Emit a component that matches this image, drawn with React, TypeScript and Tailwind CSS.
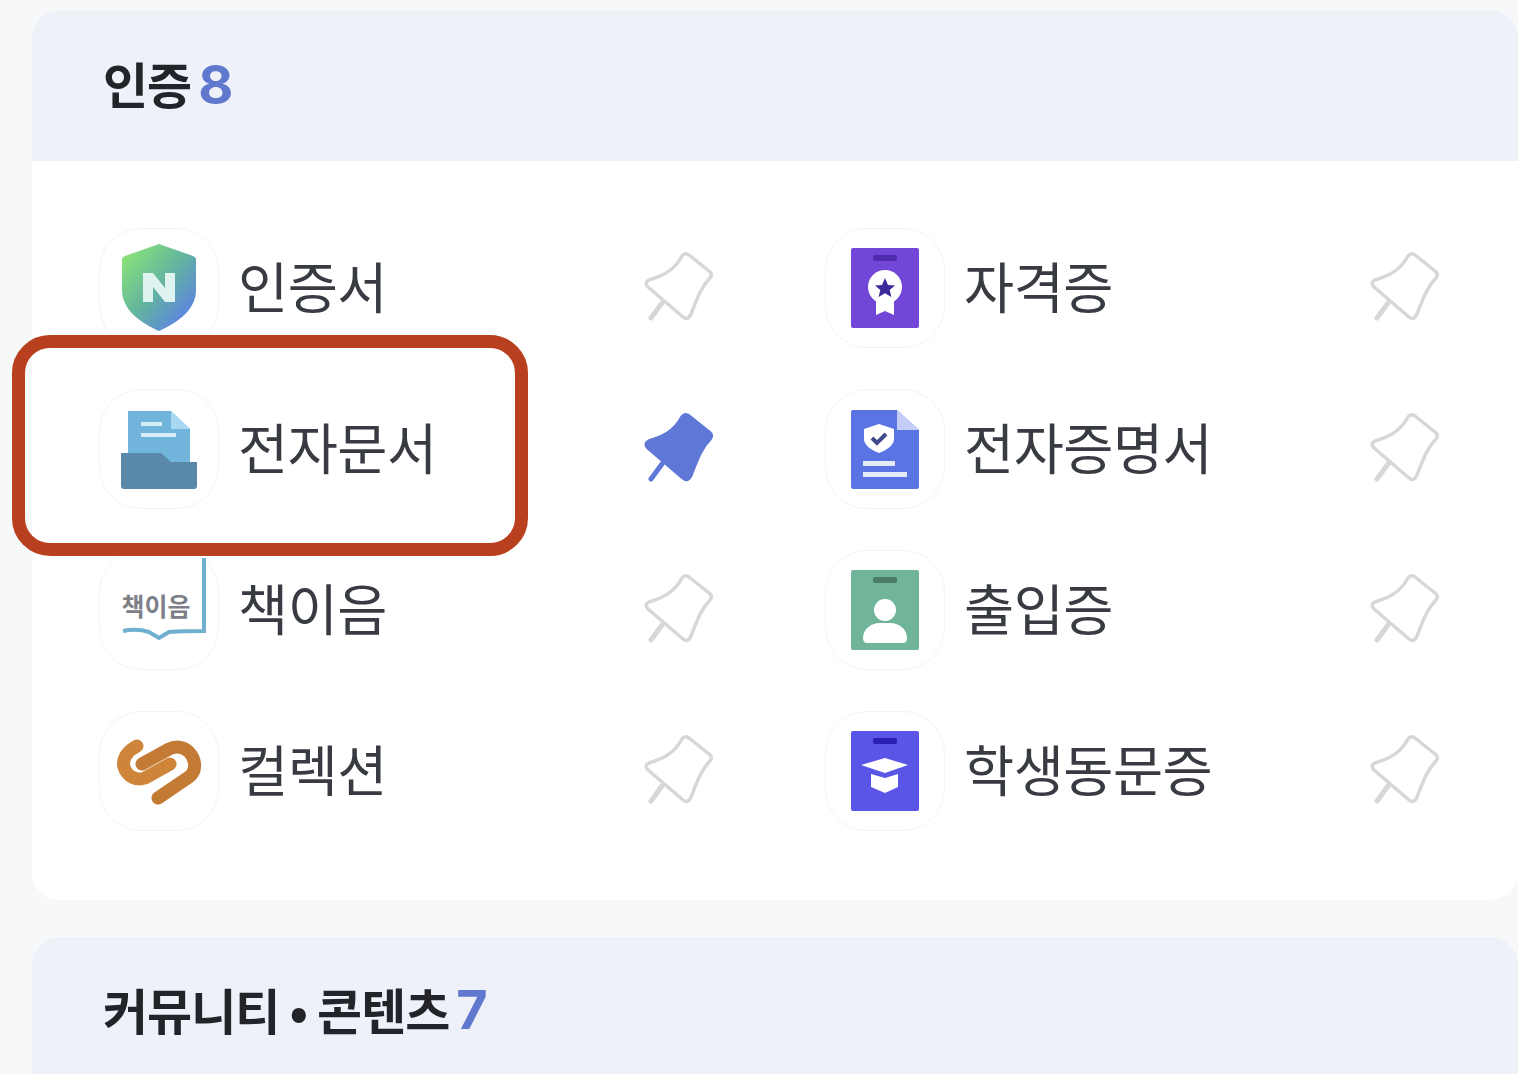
import type { ReactNode } from 'react';

const PIN_HEAD =
  'M38 4 Q41 0 45 3 L65 19 Q69 22 66 26 C56 36 52 50 47 62 Q44 69 39 65 L4 35 Q0 30 5 28 C18 24 30 19 38 4Z';

function PinIcon({ active }: { active?: boolean }) {
  return (
    <svg width="70" height="72" viewBox="-1 -1 70 72" className="shrink-0 mb-[2px]">
      <path
        d={PIN_HEAD}
        fill={active ? '#5f78d8' : '#ffffff'}
        stroke={active ? '#5f78d8' : '#d6d7d9'}
        strokeWidth="3.5"
        strokeLinejoin="round"
      />
      <path
        d="M18 51 L7 66"
        stroke={active ? '#5f78d8' : '#d6d7d9'}
        strokeWidth="5"
        strokeLinecap="round"
      />
    </svg>
  );
}

function ShieldIcon() {
  return (
    <svg width="120" height="120" viewBox="0 0 120 120">
      <defs>
        <linearGradient id="shield" x1="0.1" y1="0.1" x2="0.9" y2="0.9">
          <stop offset="0" stopColor="#86e07a" />
          <stop offset="0.5" stopColor="#62b3a0" />
          <stop offset="1" stopColor="#5c7fe8" />
        </linearGradient>
      </defs>
      <path
        d="M60 16 L94 28 Q97 29 97 32 V62 C97 82 78 95 60 103 C42 95 23 82 23 62 V32 Q23 29 26 28Z"
        fill="url(#shield)"
      />
      <path d="M44 74 V45 H54 L66 60 V45 H76 V74 H66 L54 59 V74Z" fill="#dff3f1" />
    </svg>
  );
}

function FolderIcon() {
  return (
    <svg width="120" height="120" viewBox="0 0 120 120">
      <path d="M29 22 H72 L91 40 V80 H29Z" fill="#71b4dc" />
      <path d="M72 22 L91 40 H72Z" fill="#a8d8f2" />
      <rect x="42" y="33" width="21" height="4" fill="#d6ecf8" />
      <rect x="42" y="44" width="35" height="4" fill="#d6ecf8" />
      <path
        d="M22 64 H62 L72 73 H98 V97 Q98 100 95 100 H25 Q22 100 22 97Z"
        fill="#5a88a8"
      />
    </svg>
  );
}

function BookIcon() {
  return (
    <svg width="120" height="120" viewBox="0 0 120 120" className="overflow-visible">
      <path
        d="M24 81 Q38 78 50 82 L60 88 L70 82 Q85 81 105 81 V8"
        fill="none"
        stroke="#6fb0d0"
        strokeWidth="4"
      />
      <text
        x="57"
        y="66"
        textAnchor="middle"
        fontSize="25"
        fontWeight="700"
        fill="#7d8086"
        fontFamily="'Noto Sans CJK KR', sans-serif"
      >
        책이음
      </text>
    </svg>
  );
}

function LinkIcon() {
  return (
    <svg width="120" height="120" viewBox="0 0 120 120">
      <path
        d="M38 35 C27 41 23 49 25 56 C28 66 38 70 46 67 L71 53"
        fill="none"
        stroke="#cf8539"
        strokeWidth="13"
        strokeLinecap="round"
      />
      <path
        d="M59 87 L90 66 C98 60 97 48 90 41 C84 35 76 35 70 38 L43 53"
        fill="none"
        stroke="#c27a34"
        strokeWidth="13"
        strokeLinecap="round"
      />
    </svg>
  );
}

function CardIcon({ fill, slot, children }: { fill: string; slot: string; children: ReactNode }) {
  return (
    <svg width="120" height="120" viewBox="0 0 120 120">
      <rect x="26" y="20" width="68" height="80" rx="2" fill={fill} />
      <rect x="48" y="27" width="24" height="6" rx="2" fill={slot} />
      {children}
    </svg>
  );
}

function LicenseIcon() {
  return (
    <CardIcon fill="#7247d8" slot="#4f2cae">
      <path d="M51 70 V87 L60 83 L69 87 V70Z" fill="#ffffff" />
      <circle cx="60" cy="59" r="17" fill="#ffffff" />
      <path
        d="M60 50 L63 57 L70 57.6 L64.7 62 L66.4 69 L60 65.2 L53.6 69 L55.3 62 L50 57.6 L57 57Z"
        fill="#3d2a9a"
      />
    </CardIcon>
  );
}

function CertificateIcon() {
  return (
    <svg width="120" height="120" viewBox="0 0 120 120">
      <path d="M28 21 Q26 21 26 23 V98 Q26 100 28 100 H92 Q94 100 94 98 V41 L72 21Z" fill="#5b74e4" />
      <path d="M72 21 L94 41 H72Z" fill="#c3cdf5" />
      <path
        d="M54 35 L69 40 V50 C69 56 62 61 54 64 C46 61 39 56 39 50 V40Z"
        fill="#ffffff"
      />
      <path d="M47 49 L52 54 L61 45" fill="none" stroke="#3f4a8c" strokeWidth="4" />
      <rect x="38" y="72" width="32" height="5" fill="#e6ebfb" />
      <rect x="38" y="83" width="44" height="5" fill="#e6ebfb" />
    </svg>
  );
}

function PassIcon() {
  return (
    <CardIcon fill="#70b499" slot="#4a7a68">
      <circle cx="60" cy="60" r="11" fill="#ffffff" />
      <path
        d="M38 88 C38 78 48 73 54 73 H66 C72 73 82 78 82 88 Q82 93 78 93 H42 Q38 93 38 88Z"
        fill="#ffffff"
      />
    </CardIcon>
  );
}

function StudentIcon() {
  return (
    <CardIcon fill="#5a55e6" slot="#2c1fb4">
      <path d="M60 47 L83 54 L60 62 L36 54Z" fill="#ffffff" />
      <path d="M46 63 L60 67 L73 63 V76 L60 82 L46 76Z" fill="#ffffff" />
    </CardIcon>
  );
}

const ITEMS = [
  { label: '인증서', icon: <ShieldIcon /> },
  { label: '자격증', icon: <LicenseIcon /> },
  { label: '전자문서', icon: <FolderIcon />, pinned: true },
  { label: '전자증명서', icon: <CertificateIcon /> },
  { label: '책이음', icon: <BookIcon /> },
  { label: '출입증', icon: <PassIcon /> },
  { label: '컬렉션', icon: <LinkIcon /> },
  { label: '학생동문증', icon: <StudentIcon /> },
];

function MenuRow({ label, icon, pinned }: { label: string; icon: ReactNode; pinned?: boolean }) {
  return (
    <div className="flex items-center justify-between h-[120px]">
      <div className="flex items-center gap-[19px]">
        <div className="w-[120px] h-[120px] rounded-[42px] border border-[#f4f4f5] bg-white">
          <div className="-m-px">{icon}</div>
        </div>
        <span className="text-[54.5px] leading-none text-[#383b41] tracking-[-0.5px] mb-[6px]">{label}</span>
      </div>
      <PinIcon active={pinned} />
    </div>
  );
}

function SectionHeader({ title, count, height }: { title: string; count: number; height: string }) {
  return (
    <div className={`flex items-center gap-[7px] pl-[71px] bg-[#eff1f9] rounded-t-[28px] ${height}`}>
      <span className="text-[49px] leading-none font-bold tracking-[-1px] text-[#22242a] mb-[6px]">{title}</span>
      <span className="text-[54px] leading-none font-bold text-[#6079cf] font-['Inter',sans-serif] mb-[2px]">
        {count}
      </span>
    </div>
  );
}

export default function App() {
  return (
    <div className="relative h-[1074px] w-[1518px] overflow-hidden bg-[#f7f8f9] pt-[10px] pl-[32px] font-['Noto_Sans_CJK_KR','Noto_Sans',sans-serif]">
      <section className="mb-[37px]">
        <SectionHeader title="인증" count={8} height="h-[151px]" />
        <div className="bg-white rounded-b-[28px] h-[739px] pt-[67px] pl-[67px]">
          <div className="grid grid-cols-[614px_614px] gap-x-[112px] gap-y-[41px]">
            {ITEMS.map(item => (
              <MenuRow key={item.label} label={item.label} icon={item.icon} pinned={item.pinned} />
            ))}
          </div>
        </div>
      </section>
      <section>
        <SectionHeader title="커뮤니티 • 콘텐츠" count={7} height="h-[148px]" />
      </section>
      {/* annotation drawn on top of the screenshot */}
      <div className="absolute left-[12px] top-[335px] w-[516px] h-[221px] rounded-[38px] border-[13px] border-[#b8401f]" />
    </div>
  );
}
